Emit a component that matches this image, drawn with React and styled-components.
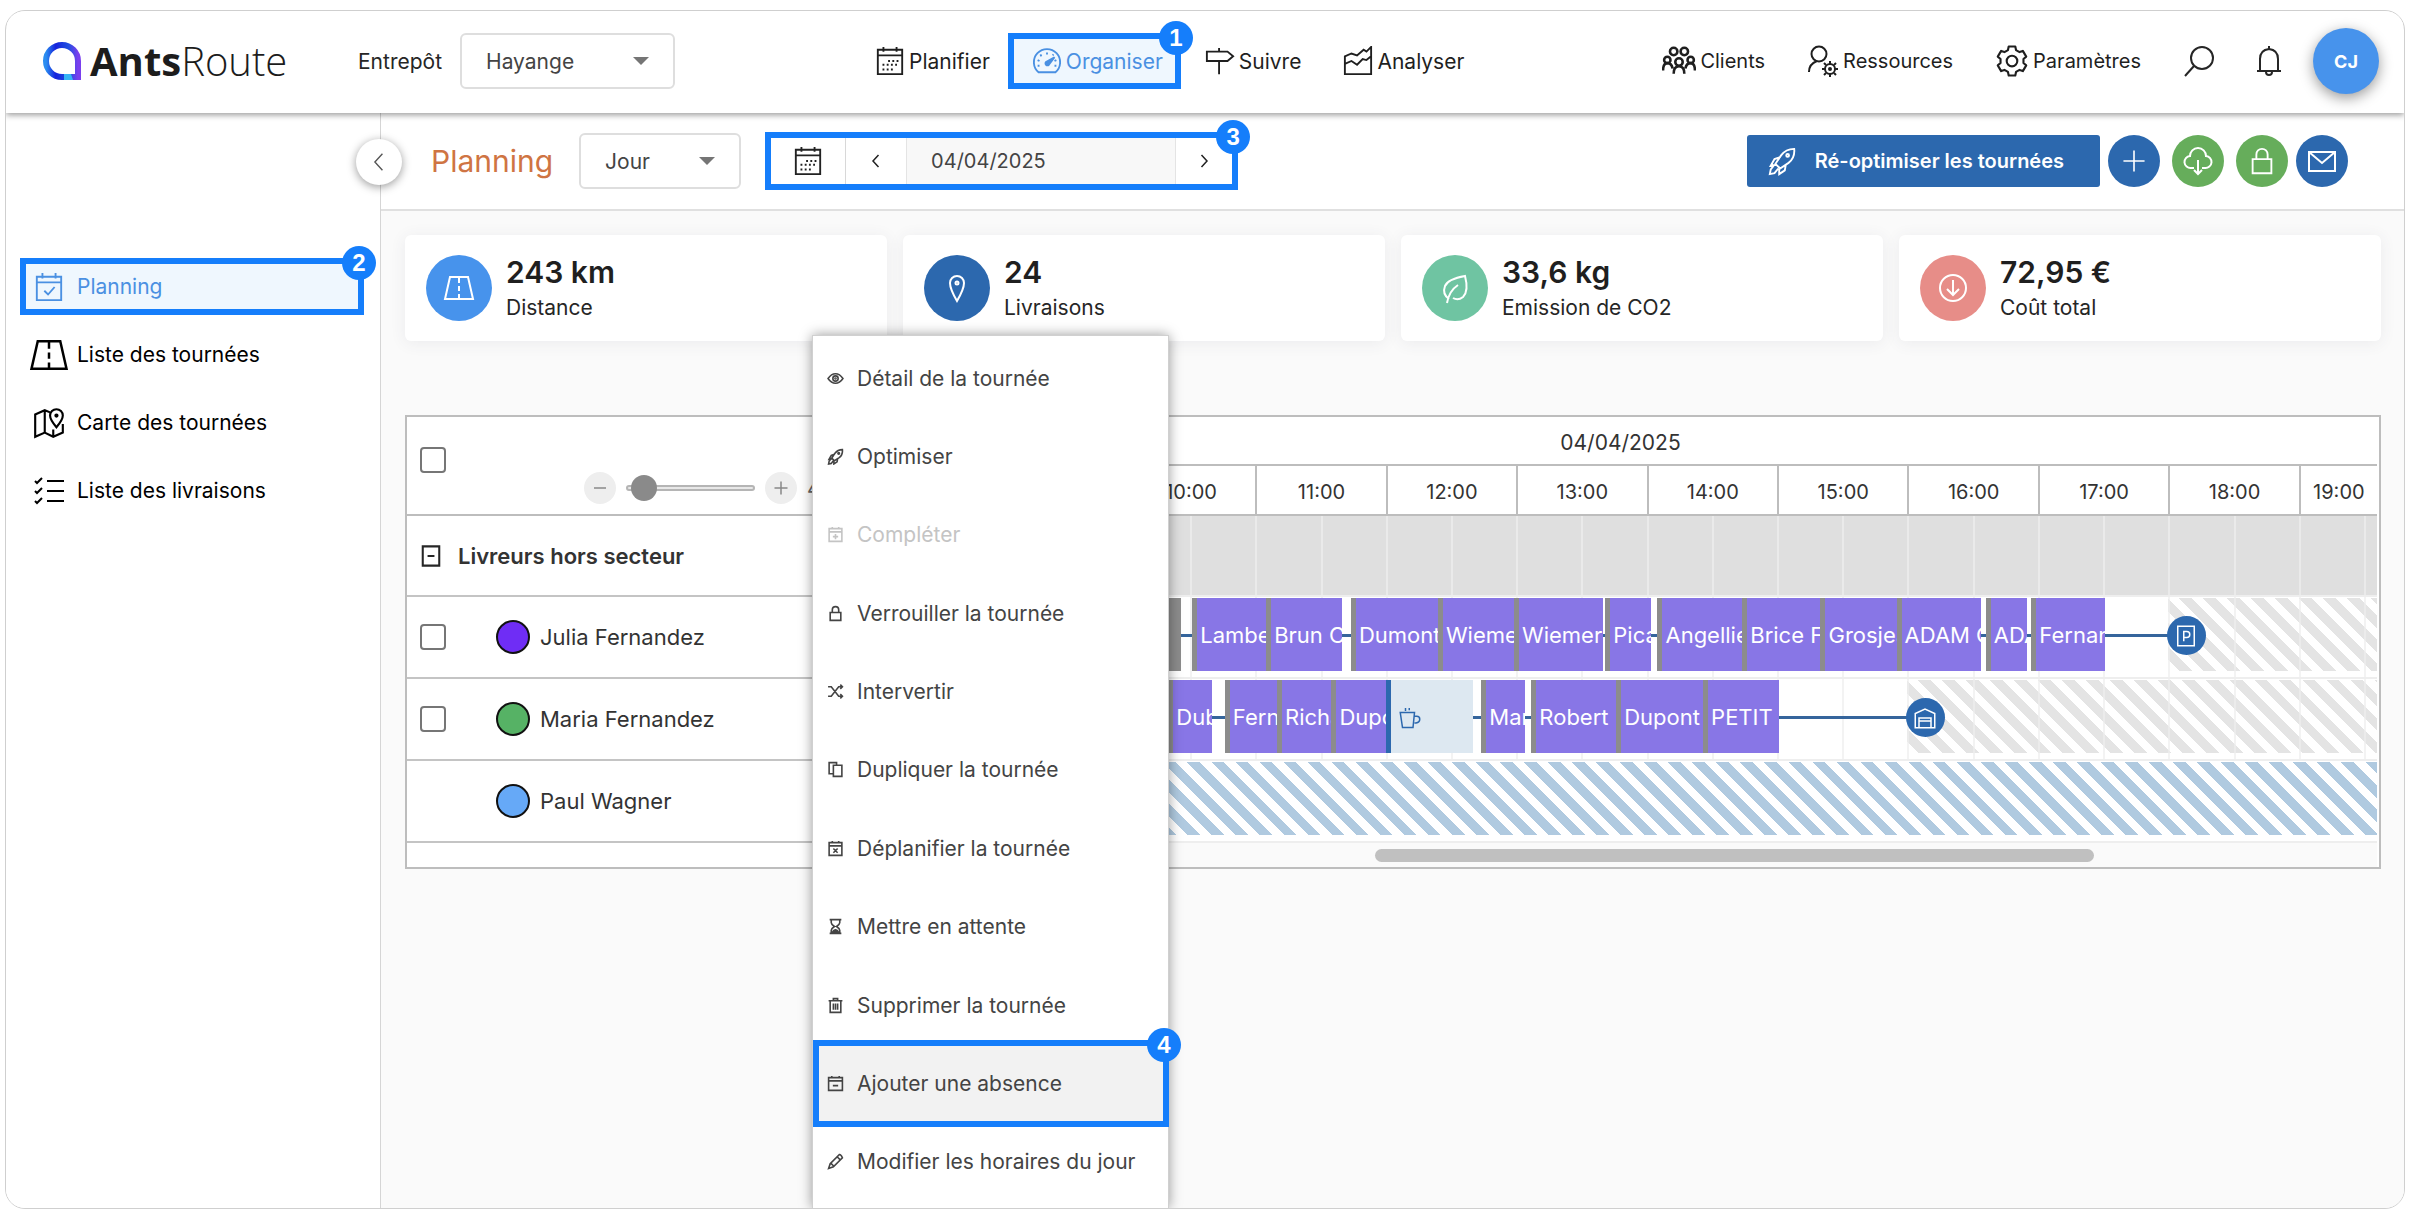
import React, { useState } from 'react'
import styled, { createGlobalStyle, css } from 'styled-components'

const GlobalStyle = createGlobalStyle`
  *, *::before, *::after { box-sizing: border-box; }
  body { margin: 0; background: #fff; }
  body, button, input, select {
    font-family: Inter, 'Open Sans', sans-serif;
    font-size: 21px;
    color: #262626;
  }
  button, a, input, select { cursor: pointer; }
  svg { display: block; flex: none; }
`

/* ---------- icons ---------- */

const polar = (radius, degrees) => {
  const angle = (degrees * Math.PI) / 180
  return `${(16 + radius * Math.cos(angle)).toFixed(1)} ${(16 + radius * Math.sin(angle)).toFixed(1)}`
}

// six teeth, one every 60 degrees
const gearPath = `M${[0, 1, 2, 3, 4, 5]
  .map(i => i * 60 - 90)
  .map(a => [polar(11, a - 20), polar(14, a - 13), polar(14, a + 13), polar(11, a + 20)].join('L'))
  .join('L')}z`

const paths = {
  calendar: (
    <>
      <path d="M3 4h26v26H3zM3 10h26M9 1v5M23 1v5" />
      <path d="M14 16h11M8 20h17M8 25h13" strokeDasharray="2 2.5" />
    </>
  ),
  calendarCheck: <path d="M3 5h26v25H3zM3 11h26M9 1v6M23 1v6M11 20l4 4 7-8" />,
  calendarPlus: <path d="M4 5h24v24H4zM4 11h24M10 2v4M22 2v4M16 15v10M11 20h10" />,
  calendarX: <path d="M4 5h24v24H4zM4 11h24M10 2v4M22 2v4M12 16l8 8M20 16l-8 8" />,
  calendarMinus: <path d="M3 5h26v24H3zM3 11h26M9 2v4M23 2v4M11 20h10" />,
  gauge: (
    <>
      <path d="M7 28a14 14 0 1 1 18 0z" />
      <path d="M16 7v2M9 9l1 2M6 15l2 1M6 21h2M23 9l-1 1M24 21h2M26 15l-2 1" />
      <path d="M24 12l-6 8a2 2 0 1 1-3-3z" fill="currentColor" />
    </>
  ),
  signpost: <path d="M2 6h22l6 5-6 5H2zM15 16v14M15 2v4" />,
  chart: <path d="M2 30V11l7-3 6 2 7-6 3 2 5-5v29zM2 19l7-3 6 4 6-6 4 1 5-4" />,
  clients: (
    <g strokeWidth="2.4">
      <circle cx="11" cy="7" r="3.5" />
      <circle cx="21" cy="7" r="3.5" />
      <circle cx="5" cy="15" r="3" />
      <circle cx="16" cy="17" r="3.5" />
      <circle cx="27" cy="15" r="3" />
      <path d="M1 25q0-7 4-7t5 5M22 23q1-5 5-5t4 7M11 28q0-7 5-7t5 7" />
    </g>
  ),
  userGear: (
    <>
      <circle cx="12" cy="9" r="7.5" />
      <path d="M2 27q0-8 8-11" />
      <circle cx="23" cy="24" r="5" />
      <circle cx="23" cy="24" r="1" />
      <path d="M23 16v3M23 29v3M15 24h3M28 24h3M17 18l2 2M27 28l2 2M29 18l-2 2M19 28l-2 2" />
    </>
  ),
  gear: (
    <>
      <path d={gearPath} strokeLinejoin="round" />
      <circle cx="16" cy="16" r="5" />
    </>
  ),
  search: (
    <>
      <circle cx="19" cy="13" r="11" />
      <path d="M11 21l-9 10" />
    </>
  ),
  bell: <path d="M4 26h24M7 26V14q0-9 9-10 9 1 9 10v12M16 4V1M13 27a3 3 0 0 0 6 0" />,
  rocket: (
    <>
      <path d="M29 3q-9 0-14 7l-6 9 5 5 9-6q7-5 6-15zM14 12l-6 2-4 7 6-1M20 20l-1 6-6 4v-6M8 20l-4 5-1 5 5-1 4-5" />
      <circle cx="22" cy="10" r="1.5" />
    </>
  ),
  plus: <path d="M16 3v26M3 16h26" />,
  minus: <path d="M4 16h24" />,
  cloud: <path d="M12 23H9a6 6 0 0 1-1-12 8 8 0 0 1 16 0 6 6 0 0 1-1 12h-3M16 15v14M12 25l4 4 4-4" />,
  lock: <path d="M6 14h20v15H6zM10 14V9a6 6 0 0 1 12 0v5" />,
  mail: <path d="M3 7h26v19H3zM3 7l13 11L29 7" />,
  road: <path d="M7 5h18l5 22H2zM16 6v5M16 14v5M16 22v4" />,
  map: (
    <>
      <path d="M17 6l-5-2-9 4v21l9-4 8 4 9-4v-8M12 4v21M20 22v7" />
      <path d="M23 20q-6-7-6-11a6 6 0 0 1 12 0q0 4-6 11z" />
      <circle cx="23" cy="9" r="1" />
    </>
  ),
  checklist: <path d="M14 6h17M14 16h17M14 26h17M2 6l2 2 5-5M2 16l2 2 5-5M2 26l2 2 5-5" />,
  pin: (
    <>
      <path d="M16 29Q9 17 9 11a7 7 0 0 1 14 0q0 6-7 18z" />
      <circle cx="16" cy="11" r="1.5" />
    </>
  ),
  leaf: <path d="M10 27q-7-5-4-13Q9 7 26 4q4 15-2 21-5 4-10 1M8 31q2-12 11-18" />,
  arrowDown: (
    <>
      <circle cx="16" cy="16" r="13" />
      <path d="M16 8v15M10 17l6 6 6-6" />
    </>
  ),
  eye: (
    <>
      <path d="M2 16q6-9 14-9t14 9q-6 9-14 9T2 16z" />
      <circle cx="16" cy="16" r="5" />
      <circle cx="16" cy="16" r="1" />
    </>
  ),
  shuffle: <path d="M2 7h6l14 18h7M2 25h6L22 7h7M25 3l4 4-4 4M25 21l4 4-4 4" />,
  copy: <path d="M12 8h16v21H12zM12 24H4V3h14v5" />,
  hourglass: (
    <>
      <path d="M5 3h22M5 29h22M8 3v6q0 3 6 7-6 4-6 7v6M24 3v6q0 3-6 7 6 4 6 7v6" />
      <path d="M10 28q1-5 6-6 5 1 6 6z" fill="currentColor" />
    </>
  ),
  trash: <path d="M3 7h26M6 7h20v22H6zM12 7V3h8v4M12 12v12M16 12v12M20 12v12" />,
  pencil: <path d="M3 29l3-9L23 3q3-1 6 6L12 26zM19 7l6 6M7 19l6 6" />,
  collapse: <path d="M4 2h24v28H4zM11 16h10" />,
  left: <path d="M21 4L10 16l11 12" />,
  right: <path d="M11 4l11 12-11 12" />,
  mug: <path d="M3 10h19l-2 20H6zM22 15h3q4 0 4 4t-5 5h-2M10 8V4M15 7V4" />,
  depot: <path d="M3 29V10l13-6 13 6v19zM8 29V16h16v13M8 20h16" />,
  parking: <path d="M5 3h22v26H5zM13 23V10h4q4 0 4 4t-4 4h-4" />,
}

const Icon = ({ name, size = 30, stroke = 2 }) => (
  <svg
    width={size}
    height={size}
    viewBox="0 0 32 32"
    fill="none"
    stroke="currentColor"
    strokeWidth={stroke}
    aria-hidden="true"
  >
    {paths[name]}
  </svg>
)

const LogoMark = () => (
  <svg width="40" height="40" viewBox="0 0 40 40" aria-hidden="true">
    <defs>
      <linearGradient id="mark" x1="0" y1="0" x2="1" y2="0">
        <stop offset="0" stopColor="#2b8df0" />
        <stop offset="0.3" stopColor="#1522dc" />
        <stop offset="0.7" stopColor="#1f4fe0" />
        <stop offset="1" stopColor="#7a3fee" />
      </linearGradient>
    </defs>
    <path d="M36 36H20A16 16 0 1 1 36 20z" fill="none" stroke="url(#mark)" strokeWidth="6" />
    <path d="M22 33h7l2 6h-9z" fill="#36b4f5" />
  </svg>
)

/* ---------- shared ---------- */

const ring = css`
  border: 6px solid #157efb;
`

// sits on the top right corner of a ringed box
const Badge = styled.span`
  position: absolute;
  top: -18px;
  right: -18px;
  z-index: 5;
  width: 34px;
  height: 34px;
  display: flex;
  align-items: center;
  justify-content: center;
  border-radius: 50%;
  background: #157efb;
  color: #fff;
  font-family: 'Liberation Sans', Arial, sans-serif;
  font-size: 24px;
  font-weight: 700;
`

const SelectBox = styled.div`
  position: relative;
  width: ${props => props.$width};
  height: 56px;

  &::after {
    content: '';
    position: absolute;
    right: 26px;
    top: 24px;
    border: 8px solid transparent;
    border-top-color: #757575;
    border-bottom: none;
    pointer-events: none;
  }

  select {
    width: 100%;
    height: 100%;
    padding: 0 24px;
    border: 2px solid #dedede;
    border-radius: 6px;
    background: #fff;
    color: #444;
    appearance: none;
  }
`

const Check = styled.input.attrs({ type: 'checkbox' })`
  appearance: none;
  flex: none;
  width: 26px;
  height: 26px;
  margin: 0;
  border: 2px solid #767676;
  border-radius: 4px;
  background: #fff;

  &:checked {
    background: #157efb;
  }
`

/* ---------- frame and header ---------- */

const Frame = styled.div`
  position: relative;
  display: flex;
  flex-direction: column;
  min-height: calc(100vh - 18px);
  margin: 10px 5px 8px;
  border: 1px solid #cfcfcf;
  border-radius: 20px;
  overflow: hidden;
`

const Header = styled.header`
  position: relative;
  z-index: 2;
  display: flex;
  align-items: center;
  height: 102px;
  padding: 0 25px 2px 36px;
  background: #fff;
  box-shadow: 0 2px 6px rgba(0, 0, 0, 0.4);
`

const Logo = styled.a`
  display: flex;
  align-items: center;
  gap: 8px;
  width: 316px;
  color: #1c1c1c;
  font-family: 'Open Sans', sans-serif;
  font-size: 40px;
  line-height: 48px;
  font-weight: 300;
  text-decoration: none;

  b { font-weight: 700; }
`

const Depot = styled.label`
  display: flex;
  align-items: center;
  gap: 18px;
`

const Nav = styled.nav`
  display: flex;
  align-items: center;
  margin-left: ${props => (props.$end ? 'auto' : '176px')};
  font-size: ${props => (props.$end ? '20px' : '21px')};
`

const NavLink = styled.a`
  position: relative;
  display: flex;
  align-items: center;
  gap: 4px;
  height: 56px;
  padding: 0 18px 0 24px;
  color: #1f1f1f;
  text-decoration: none;

  ${props => props.$active && css`
    ${ring}
    padding: 0 12px 0 18px;
    background: #eff7fe;
    color: #4a90e2;
  `}
`

const HeaderButton = styled.button`
  display: flex;
  margin-left: ${props => props.$gap};
  padding: 0;
  border: none;
  background: none;
`

const Avatar = styled.button`
  width: 66px;
  height: 66px;
  margin-left: 28px;
  border: none;
  border-radius: 50%;
  background: #4793ec;
  box-shadow: 0 4px 14px rgba(0, 0, 0, 0.4);
  color: #fff;
  font-size: 18px;
  font-weight: 700;
`

/* ---------- sidebar ---------- */

const Body = styled.div`
  flex: 1;
  display: grid;
  grid-template-columns: 375px minmax(0, 1fr);
`

const Sidebar = styled.aside`
  position: relative;
  border-right: 1px solid #d5d5d5;
  padding: 145px 16px 0 14px;
  background: #fff;
`

const Collapse = styled.button`
  position: absolute;
  top: 26px;
  right: -22px;
  z-index: 1;
  display: flex;
  align-items: center;
  justify-content: center;
  width: 46px;
  height: 46px;
  padding: 0;
  border: none;
  border-radius: 50%;
  background: #fff;
  color: #555;
  box-shadow: 0 2px 10px rgba(0, 0, 0, 0.4);
`

const SideNav = styled.nav`
  display: flex;
  flex-direction: column;
  gap: 11px;
`

const SideLink = styled.a`
  position: relative;
  display: grid;
  grid-template-columns: 45px 1fr;
  align-items: center;
  height: 57px;
  padding-left: 12px;
  color: #000;
  text-decoration: none;

  svg { justify-self: center; margin-right: 12px; }

  ${props => props.$active && css`
    ${ring}
    padding-left: 6px;
    background: #eff7fe;
    color: #4a90e2;
  `}
`

/* ---------- toolbar ---------- */

const Main = styled.main`
  background: #fafafa;
`

const Toolbar = styled.div`
  display: flex;
  align-items: center;
  height: 98px;
  padding: 0 56px 0 50px;
  border-bottom: 2px solid #e0e0e0;
  background: #fff;
`

const PageTitle = styled.h1`
  margin: 0 26px 0 0;
  color: #cf7443;
  font-size: 30px;
  line-height: 36px;
  font-weight: 400;
`

const DatePicker = styled.div`
  ${ring}
  position: relative;
  display: grid;
  grid-template-columns: 75px 60px 270px 1fr;
  width: 473px;
  height: 58px;
  margin-left: 24px;

  button {
    display: flex;
    align-items: center;
    justify-content: center;
    padding: 0;
    border: none;
    background: #fff;
    color: #222;
  }

  input {
    min-width: 0;
    padding: 0 24px;
    border: 1px solid #e4e4e4;
    border-width: 0 1px;
    background: #f8f8f8;
    color: #444;
    font-size: 20px;
  }

  button:first-child { border-right: 1px solid #d8d8d8; }
`

const Actions = styled.div`
  display: flex;
  align-items: center;
  gap: 12px;
  margin-left: auto;
`

const Primary = styled.button`
  display: flex;
  align-items: center;
  gap: 18px;
  height: 52px;
  margin-right: -4px;
  padding: 0 36px 0 20px;
  border: none;
  border-radius: 3px;
  background: #2c68ae;
  color: #fff;
  font-size: 20px;
  font-weight: 600;
`

const RoundButton = styled.button`
  display: flex;
  align-items: center;
  justify-content: center;
  width: 52px;
  height: 52px;
  padding: 0;
  border: none;
  border-radius: 50%;
  background: ${props => props.$color};
  color: #fff;

  &:last-child { margin-left: -4px; }
`

/* ---------- cards ---------- */

const Content = styled.div`
  padding: 24px 23px 24px 24px;
`

const Cards = styled.section`
  display: grid;
  grid-template-columns: repeat(4, 1fr);
  gap: 16px;
  margin-bottom: 74px;
`

const Card = styled.article`
  display: flex;
  align-items: center;
  gap: 14px;
  height: 106px;
  padding: 0 21px;
  border-radius: 6px;
  background: #fff;
  box-shadow: 0 2px 16px rgba(60, 60, 90, 0.08);
`

const CardIcon = styled.span`
  display: flex;
  align-items: center;
  justify-content: center;
  width: 66px;
  height: 66px;
  border-radius: 50%;
  background: ${props => props.$color};
  color: #fff;
`

const CardValue = styled.strong`
  display: block;
  color: #1f1f1f;
  font-size: 30px;
  line-height: 40px;
  font-weight: 600;
`

const CardLabel = styled.span`
  display: block;
  line-height: 32px;
`

/* ---------- schedule ---------- */

const Schedule = styled.section`
  display: grid;
  grid-template-columns: 457px minmax(0, 1fr);
  padding-right: 2px;
  border: 2px solid #bdbdbd;
  background: #fff;
`

const ListHead = styled.div`
  display: flex;
  align-items: flex-start;
  height: 99px;
  padding: 30px 0 0 13px;
  border-bottom: 2px solid #bdbdbd;
`

const Zoom = styled.div`
  display: flex;
  align-items: center;
  gap: 10px;
  margin: 25px 0 0 138px;
  color: #666;

  button {
    display: flex;
    align-items: center;
    justify-content: center;
    width: 32px;
    height: 32px;
    padding: 0;
    border: none;
    border-radius: 50%;
    background: #eee;
    color: #888;
  }

  input {
    appearance: none;
    width: 129px;
    height: 6px;
    margin: 0;
    border: 2px solid #b5b5b5;
    border-radius: 3px;
    background: #e8e8e8;
  }

  input::-webkit-slider-thumb {
    appearance: none;
    width: 26px;
    height: 26px;
    border-radius: 50%;
    background: #8a8a8a;
  }
`

const ListRow = styled.div`
  display: flex;
  align-items: center;
  height: ${props => (props.$group ? '81px' : '82px')};
  padding-left: 13px;
  border-bottom: 2px solid #c4c4c4;
  color: #333;
  font-size: 22px;
  font-weight: ${props => (props.$group ? 600 : 400)};
`

const Fold = styled.button`
  display: flex;
  margin-right: 16px;
  padding: 0;
  border: none;
  background: none;
`

const CheckSlot = styled.span`
  display: flex;
  width: 76px;
`

const Dot = styled.span`
  width: 34px;
  height: 34px;
  margin-right: 10px;
  border: 2px solid #111;
  border-radius: 50%;
  background: ${props => props.$color};
`

const DayLabel = styled.div`
  display: flex;
  align-items: center;
  justify-content: center;
  height: 49px;
  padding-top: 4px;
  border-bottom: 2px solid #bdbdbd;
  color: #333;
`

const Hours = styled.div`
  display: grid;
  grid-template-columns: repeat(11, minmax(0, 5fr)) minmax(0, 3fr);
  height: 50px;
  border-bottom: 2px solid #bdbdbd;
  font-size: 20px;
`

const Hour = styled.span`
  display: flex;
  align-items: center;
  justify-content: center;
  padding-top: 4px;
  color: #333;

  & + & { border-left: 2px solid #bdbdbd; }
`

const Lane = styled.div`
  position: relative;
  height: ${props => (props.$group ? '81px' : '82px')};
  border-bottom: 2px solid #eee;
  background-color: ${props => (props.$group ? '#dfdfdf' : '#fff')};
`

const HalfHours = styled.div`
  position: absolute;
  inset: 0;
  display: grid;
  grid-template-columns: repeat(23, minmax(0, 5fr)) minmax(0, 1fr);
  pointer-events: none;

  i + i { border-left: 2px solid rgba(238, 238, 238, 0.7); }
`

const Span = styled.div`
  position: absolute;
  top: 1px;
  height: 73px;
`

const Hatch = styled(Span)`
  background: repeating-linear-gradient(
    45deg,
    transparent 0 8px,
    ${props => props.$color} 8px 17px
  );
`

const Trip = styled(Span)`
  top: 37px;
  height: 3px;
  background: #35659c;
`

const Stop = styled(Span)`
  display: flex;
  align-items: center;
  padding-left: 3px;
  border-left: 5px solid #8c8c8c;
  background: #8876e6;
  color: #fff;
  font-size: 22px;
  white-space: nowrap;
  overflow: hidden;
`

const Pause = styled(Stop)`
  padding-left: 7px;
  border-left-color: #2c68ae;
  background: #dde8f1;
  color: #2c68ae;
`

const Shift = styled(Stop)`
  background: #8c8c8c;
`

const Terminus = styled(Span)`
  top: 19px;
  display: flex;
  align-items: center;
  justify-content: center;
  width: 39px;
  height: 39px;
  margin-left: -19px;
  border-radius: 50%;
  background: #2c68ae;
  color: #fff;
`

const ScrollTrack = styled.div`
  position: relative;
  height: 24px;
  background: #fafafa;
`

const ScrollThumb = styled(Span)`
  top: 6px;
  height: 13px;
  border-radius: 7px;
  background: #c0c0c0;
`

/* ---------- context menu ---------- */

const Menu = styled.ul`
  position: absolute;
  top: 324px;
  bottom: 0;
  left: 806px;
  z-index: 3;
  display: grid;
  grid-auto-rows: 1fr;
  width: 357px;
  margin: 0;
  padding: 3px 0 7px;
  border: 1px solid #d0d0d0;
  border-bottom: none;
  background: #fff;
  box-shadow: 0 0 12px rgba(0, 0, 0, 0.4);
  list-style: none;

  li { display: grid; }
`

const MenuItem = styled.button`
  display: flex;
  align-items: center;
  gap: 13px;
  padding: 0 0 0 14px;
  border: none;
  background: #fff;
  color: ${props => (props.disabled ? '#c4c4c4' : '#444')};
  text-align: left;

  ${props => props.$active && css`
    ${ring}
    position: relative;
    z-index: 1;
    margin: -4px -1px -4px 0;
    padding-left: 8px;
    background: #f2f2f2;
  `}
`

/* ---------- data ---------- */

const DAY_MINUTES = 696
const pct = minutes => `${(minutes / DAY_MINUTES) * 100}%`
const place = (start, end) => ({ left: pct(start), width: pct(end - start) })

const cards = [
  { icon: 'road', color: '#4793ec', value: '243 km', label: 'Distance' },
  { icon: 'pin', color: '#2c68ae', value: '24', label: 'Livraisons' },
  { icon: 'leaf', color: '#6fc4a2', value: '33,6 kg', label: 'Emission de CO2' },
  { icon: 'arrowDown', color: '#e78d88', value: '72,95 €', label: 'Coût total' },
]

const sideLinks = [
  { icon: 'calendarCheck', label: 'Planning', size: 30, badge: 2 },
  { icon: 'road', label: 'Liste des tournées', size: 40 },
  { icon: 'map', label: 'Carte des tournées', size: 34 },
  { icon: 'checklist', label: 'Liste des livraisons', size: 32 },
]

const menu = [
  { icon: 'eye', label: 'Détail de la tournée' },
  { icon: 'rocket', label: 'Optimiser' },
  { icon: 'calendarPlus', label: 'Compléter', disabled: true },
  { icon: 'lock', label: 'Verrouiller la tournée' },
  { icon: 'shuffle', label: 'Intervertir' },
  { icon: 'copy', label: 'Dupliquer la tournée' },
  { icon: 'calendarX', label: 'Déplanifier la tournée' },
  { icon: 'hourglass', label: 'Mettre en attente' },
  { icon: 'trash', label: 'Supprimer la tournée' },
  { icon: 'calendarMinus', label: 'Ajouter une absence', badge: 4 },
  { icon: 'pencil', label: 'Modifier les horaires du jour' },
]

const hours = ['8:00', '9:00', '10:00', '11:00', '12:00', '13:00', '14:00', '15:00', '16:00', '17:00', '18:00', '19:00']

// minutes counted from 8:00
const drivers = [
  {
    name: 'Julia Fernandez',
    color: '#6f2df5',
    shift: [109, 146],
    trip: [146, 600],
    closed: 600,
    end: { at: 608, icon: 'parking' },
    stops: [
      [151, 185, 'Lambert'], [185, 220, 'Brun C'], [224, 264, 'Dumont'],
      [264, 299, 'Wiemer'], [299, 340, 'Wiemer'], [341, 362, 'Picard'],
      [365, 404, 'Angellier'], [404, 440, 'Brice F'], [440, 475, 'Grosjean'],
      [475, 514, 'ADAM C'], [516, 535, 'ADAM'], [537, 571, 'Fernandez'],
    ],
  },
  {
    name: 'Maria Fernandez',
    color: '#56b265',
    trip: [140, 480],
    closed: 480,
    end: { at: 488, icon: 'depot' },
    pause: [240, 280],
    stops: [
      [140, 160, 'Dubois'], [166, 190, 'Fernandez'], [190, 215, 'Richard'],
      [215, 240, 'Dupont'], [284, 304, 'Martin'], [307, 346, 'Robert'],
      [346, 386, 'Dupont'], [386, 421, 'PETIT A'],
    ],
  },
  { name: 'Paul Wagner', color: '#66a9f7', absent: true },
]

/* ---------- parts ---------- */

const Grid = () => (
  <HalfHours>
    {Array.from({ length: 24 }, (_, i) => <i key={i} />)}
  </HalfHours>
)

const DriverLane = ({ driver }) => (
  <Lane>
    {driver.absent && <Hatch $color="#b0cae0" style={place(0, DAY_MINUTES)} />}
    {driver.closed && <Hatch $color="#e4e4e4" style={place(driver.closed, DAY_MINUTES)} />}
    {!driver.absent && <Grid />}
    {driver.trip && <Trip style={place(...driver.trip)} />}
    {driver.shift && <Shift style={place(...driver.shift)} />}
    {driver.pause && (
      <Pause style={place(...driver.pause)}><Icon name="mug" size={24} /></Pause>
    )}
    {driver.stops && driver.stops.map(([start, end, label]) => (
      <Stop key={start} style={place(start, end)}>{label}</Stop>
    ))}
    {driver.end && (
      <Terminus style={{ left: pct(driver.end.at) }}><Icon name={driver.end.icon} size={24} /></Terminus>
    )}
  </Lane>
)

const App = () => {
  const [scale, setScale] = useState(4)

  return (
    <>
      <GlobalStyle />
      <Frame>
        <Header>
          <Logo href="#" aria-label="AntsRoute">
            <LogoMark />
            <span><b>Ants</b>Route</span>
          </Logo>
          <Depot>
            Entrepôt
            <SelectBox $width="215px">
              <select defaultValue="Hayange"><option>Hayange</option></select>
            </SelectBox>
          </Depot>
          <Nav>
            <NavLink href="#"><Icon name="calendar" />Planifier</NavLink>
            <NavLink href="#" $active><Icon name="gauge" />Organiser<Badge>1</Badge></NavLink>
            <NavLink href="#"><Icon name="signpost" />Suivre</NavLink>
            <NavLink href="#"><Icon name="chart" />Analyser</NavLink>
          </Nav>
          <Nav $end>
            <NavLink href="#"><Icon name="clients" size={34} />Clients</NavLink>
            <NavLink href="#"><Icon name="userGear" size={32} />Ressources</NavLink>
            <NavLink href="#"><Icon name="gear" size={34} />Paramètres</NavLink>
          </Nav>
          <HeaderButton $gap="24px" aria-label="Rechercher"><Icon name="search" size={32} /></HeaderButton>
          <HeaderButton $gap="38px" aria-label="Notifications"><Icon name="bell" size={32} /></HeaderButton>
          <Avatar>CJ</Avatar>
        </Header>

        <Body>
          <Sidebar>
            <Collapse aria-label="Réduire"><Icon name="left" size={22} /></Collapse>
            <SideNav>
              {sideLinks.map(link => (
                <SideLink key={link.label} href="#" $active={!!link.badge}>
                  <Icon name={link.icon} size={link.size} />
                  {link.label}
                  {link.badge && <Badge>{link.badge}</Badge>}
                </SideLink>
              ))}
            </SideNav>
          </Sidebar>

          <Main>
            <Toolbar>
              <PageTitle>Planning</PageTitle>
              <SelectBox $width="162px">
                <select aria-label="Période" defaultValue="Jour"><option>Jour</option></select>
              </SelectBox>
              <DatePicker>
                <button aria-label="Calendrier"><Icon name="calendar" size={30} /></button>
                <button aria-label="Jour précédent"><Icon name="left" size={16} stroke={3} /></button>
                <input aria-label="Date" defaultValue="04/04/2025" />
                <button aria-label="Jour suivant"><Icon name="right" size={16} stroke={3} /></button>
                <Badge>3</Badge>
              </DatePicker>
              <Actions>
                <Primary><Icon name="rocket" />Ré-optimiser les tournées</Primary>
                <RoundButton $color="#2c68ae" aria-label="Ajouter"><Icon name="plus" size={26} /></RoundButton>
                <RoundButton $color="#66ad5b" aria-label="Télécharger"><Icon name="cloud" size={32} /></RoundButton>
                <RoundButton $color="#66ad5b" aria-label="Verrouiller"><Icon name="lock" size={30} /></RoundButton>
                <RoundButton $color="#2c68ae" aria-label="Envoyer"><Icon name="mail" size={32} /></RoundButton>
              </Actions>
            </Toolbar>

            <Content>
              <Cards>
                {cards.map(card => (
                  <Card key={card.label}>
                    <CardIcon $color={card.color}><Icon name={card.icon} size={32} /></CardIcon>
                    <div>
                      <CardValue>{card.value}</CardValue>
                      <CardLabel>{card.label}</CardLabel>
                    </div>
                  </Card>
                ))}
              </Cards>

              <Schedule>
                <div>
                  <ListHead>
                    <Check aria-label="Tout sélectionner" />
                    <Zoom>
                      <button aria-label="Réduire l'échelle"><Icon name="minus" size={16} stroke={3} /></button>
                      <input
                        type="range"
                        aria-label="Échelle"
                        min="3"
                        max="36"
                        value={scale}
                        onChange={e => setScale(Number(e.target.value))}
                      />
                      <button aria-label="Agrandir l'échelle"><Icon name="plus" size={16} stroke={3} /></button>
                      <span>{scale}</span>
                    </Zoom>
                  </ListHead>
                  <ListRow $group>
                    <Fold aria-label="Replier"><Icon name="collapse" size={22} stroke={3} /></Fold>
                    Livreurs hors secteur
                  </ListRow>
                  {drivers.map(driver => (
                    <ListRow key={driver.name}>
                      <CheckSlot>{!driver.absent && <Check aria-label={driver.name} />}</CheckSlot>
                      <Dot $color={driver.color} />
                      {driver.name}
                    </ListRow>
                  ))}
                </div>
                <div>
                  <DayLabel>04/04/2025</DayLabel>
                  <Hours>
                    {hours.map(hour => <Hour key={hour}>{hour}</Hour>)}
                  </Hours>
                  <Lane $group><Grid /></Lane>
                  {drivers.map(driver => <DriverLane key={driver.name} driver={driver} />)}
                  <ScrollTrack><ScrollThumb style={place(235, 566)} /></ScrollTrack>
                </div>
              </Schedule>
            </Content>
          </Main>
        </Body>

        <Menu>
          {menu.map(item => (
            <li key={item.label}>
              <MenuItem disabled={item.disabled} $active={!!item.badge}>
                <Icon name={item.icon} size={17} stroke={3} />
                {item.label}
                {item.badge && <Badge>{item.badge}</Badge>}
              </MenuItem>
            </li>
          ))}
        </Menu>
      </Frame>
    </>
  )
}

export default App
